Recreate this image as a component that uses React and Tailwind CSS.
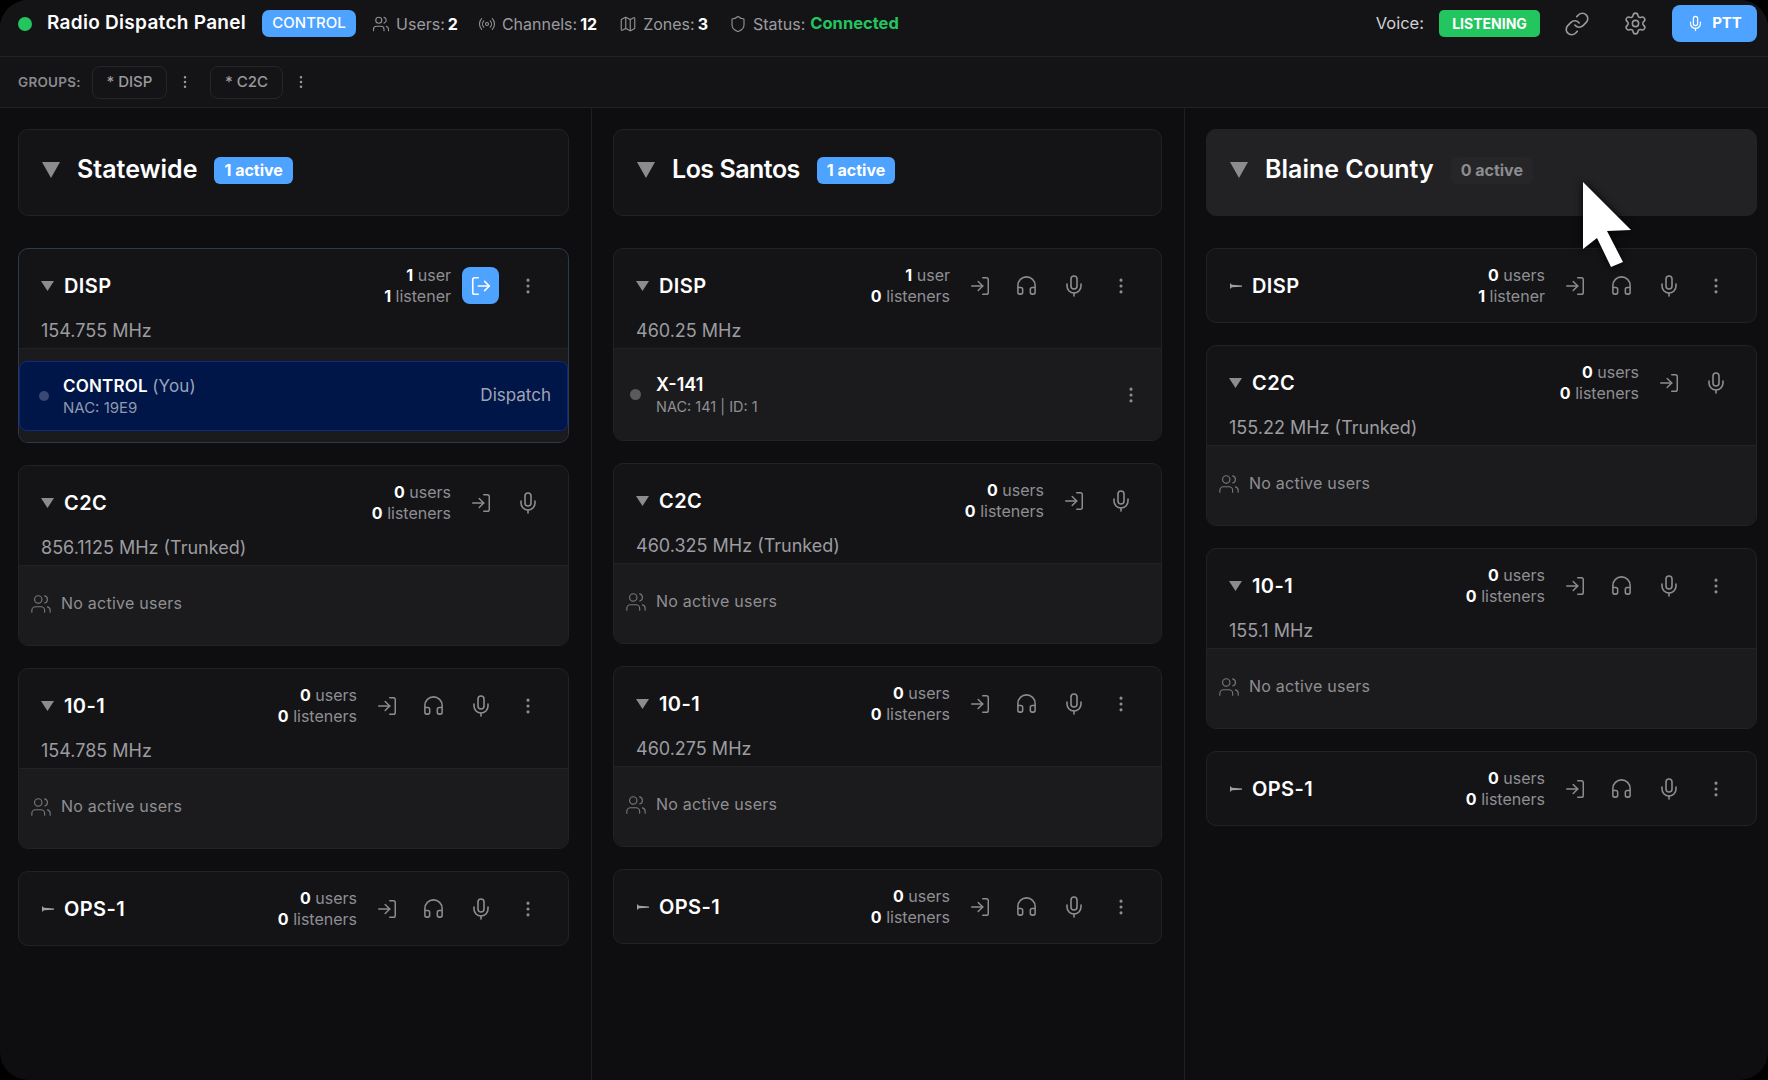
import { Users, Radio, Map, Shield, Link, Settings, Mic, LogIn, LogOut, Headphones, EllipsisVertical } from "lucide-react"

const zones = [
  {
    name: "Statewide",
    active: 1,
    columnClass: "w-[592px] shrink-0 pl-[18px] pr-[22px] border-r",
    channels: [
      { name: "DISP", users: 1, listeners: 1, freq: "154.755 MHz", joined: true, user: { name: "CONTROL", you: true, sub: "NAC: 19E9", role: "Dispatch" } },
      { name: "C2C", users: 0, listeners: 0, freq: "856.1125 MHz (Trunked)", trunked: true },
      { name: "10-1", users: 0, listeners: 0, freq: "154.785 MHz" },
      { name: "OPS-1", users: 0, listeners: 0, closed: true },
    ],
  },
  {
    name: "Los Santos",
    active: 1,
    titleClass: "tracking-[-0.02em]",
    columnClass: "w-[593px] shrink-0 pl-[21px] pr-[22px] border-r",
    channels: [
      { name: "DISP", users: 1, listeners: 0, freq: "460.25 MHz", user: { name: "X-141", sub: "NAC: 141 | ID: 1" } },
      { name: "C2C", users: 0, listeners: 0, freq: "460.325 MHz (Trunked)", trunked: true },
      { name: "10-1", users: 0, listeners: 0, freq: "460.275 MHz" },
      { name: "OPS-1", users: 0, listeners: 0, closed: true },
    ],
  },
  {
    name: "Blaine County",
    active: 0,
    hover: true,
    columnClass: "flex-1 pl-[21px] pr-[11px]",
    channels: [
      { name: "DISP", users: 0, listeners: 1, closed: true },
      { name: "C2C", users: 0, listeners: 0, freq: "155.22 MHz (Trunked)", trunked: true },
      { name: "10-1", users: 0, listeners: 0, freq: "155.1 MHz" },
      { name: "OPS-1", users: 0, listeners: 0, closed: true },
    ],
  },
]

function plural(count, word) {
  return count === 1 ? word : `${word}s`
}

function IconButton({ children }) {
  return <button className="flex h-[37px] w-[37px] items-center justify-center text-[#8d8d91]">{children}</button>
}

function HeadStat({ icon: Icon, label, value, className }) {
  return (
    <div className={`flex items-center ${className}`}>
      <Icon size={18} strokeWidth={1.5} className="mr-[6px] text-[#929296]" />
      <span className="text-[#9b9b9f]">{label}:</span>
      <span className="ml-[3px] font-bold text-white">{value}</span>
    </div>
  )
}

function ClosedCaret() {
  return (
    <svg width="13" height="10" viewBox="0 0 13 10" className="shrink-0 text-[#a0a0a0]">
      <polygon points="1,2 3,3.8 13,4.4 13,5.8 3,6.2 1,8" fill="currentColor" />
    </svg>
  )
}

function OpenCaret() {
  return (
    <svg width="13" height="10" viewBox="0 0 13 10" className="shrink-0 text-[#8c8c8c]">
      <polygon points="0,0 13,0 6.5,10" fill="currentColor" />
    </svg>
  )
}

function Channel({ channel }) {
  const { name, users, listeners, freq, closed, trunked, joined, user } = channel
  return (
    <div className={`overflow-hidden rounded-[10px] border bg-[#141417] ${joined ? "border-[#2b3a4e]" : "border-[#222225]"}`}>
      <div className={`pl-[22px] pr-[22px] ${closed ? "h-[73px]" : "h-[99px]"}`}>
        <div className="flex h-[73px] items-center">
          {closed ? <ClosedCaret /> : <OpenCaret />}
          <span className="ml-[10px] text-[20px] font-semibold tracking-[0.02em] text-white">{name}</span>
          <div className="ml-auto text-right text-[16px] leading-[21px] text-[#8f8f93]">
            <div><span className="font-bold text-white">{users}</span> {plural(users, "user")}</div>
            <div><span className="font-bold text-white">{listeners}</span> {plural(listeners, "listener")}</div>
          </div>
          <div className="ml-[11px] flex gap-[10px]">
            {joined ? (
              <button className="flex h-[37px] w-[37px] items-center justify-center rounded-[8px] bg-[#4da3ff] text-white">
                <LogOut size={22} strokeWidth={1.75} />
              </button>
            ) : (
              <IconButton><LogIn size={22} strokeWidth={1.6} /></IconButton>
            )}
            {!trunked && !joined && <IconButton><Headphones size={23} strokeWidth={1.6} /></IconButton>}
            {!joined && <IconButton><Mic size={24} strokeWidth={1.6} /></IconButton>}
            {!trunked && <IconButton><EllipsisVertical size={20} strokeWidth={1.75} /></IconButton>}
          </div>
        </div>
        {freq && <div className="-mt-[3px] text-[18px] leading-[24px] text-[#9c9ca0]">{freq}</div>}
      </div>
      {!closed && <ChannelBody user={user} />}
    </div>
  )
}

function ChannelBody({ user }) {
  if (user && user.you) {
    return (
      <div className="h-[94px] border-t border-[#222225] bg-[#1b1b1d] pt-[12px]">
        <div className="flex h-[70px] items-center rounded-[8px] border border-[#0c2a80] bg-[#001548] pl-[19px] pr-[16px]">
          <span className="h-[10px] w-[10px] rounded-full bg-[#3a4873]" />
          <div className="ml-[14px]">
            <div className="text-[17px] font-semibold leading-[24px] tracking-[0.01em] text-white">
              {user.name} <span className="font-normal text-[#9aa3b8]">(You)</span>
            </div>
            <div className="text-[15px] leading-[20px] text-[#9099ad]">{user.sub}</div>
          </div>
          <span className="ml-auto text-[17px] text-[#a0a5b4]">{user.role}</span>
        </div>
      </div>
    )
  }
  if (user) {
    return (
      <div className="flex h-[92px] items-center border-t border-[#222225] bg-[#1b1b1d] pl-[16px] pr-[20px]">
        <span className="h-[11px] w-[11px] rounded-full bg-[#5a5a5d]" />
        <div className="ml-[15px]">
          <div className="text-[18px] font-semibold leading-[24px] text-white">{user.name}</div>
          <div className="text-[14.5px] leading-[20px] text-[#8f8f93]">{user.sub}</div>
        </div>
        <EllipsisVertical size={20} strokeWidth={1.75} className="ml-auto text-[#8d8d91]" />
      </div>
    )
  }
  return (
    <div className="flex h-[80px] items-start border-t border-[#222225] bg-[#1b1b1d] pl-[11px] pt-[27px]">
      <Users size={22} strokeWidth={1.25} className="text-[#77777b]" />
      <span className="ml-[9px] text-[16px] leading-[20px] tracking-[0.015em] text-[#8f8f93]">No active users</span>
    </div>
  )
}

function ZoneColumn({ zone }) {
  return (
    <div className={`border-[#1f1f22] pt-[21px] ${zone.columnClass}`}>
      <div className={`flex h-[87px] items-center rounded-[10px] border pb-[5px] pl-[23px] ${zone.hover ? "border-[#222225] bg-[#222225]" : "border-[#222225] bg-[#141417]"}`}>
        <svg width="18" height="16" viewBox="0 0 18 16" className="shrink-0 text-[#8c8c8c]">
          <polygon points="0,0 18,0 9,16" fill="currentColor" />
        </svg>
        <span className={`ml-[17px] text-[25px] font-semibold text-white ${zone.titleClass || ""}`}>{zone.name}</span>
        <span className={`ml-[17px] flex h-[27px] items-center rounded-[6px] px-[10px] text-[16px] font-bold ${zone.active ? "bg-[#4da3ff] text-white" : "bg-[#262629] text-[#8c8c8f]"}`}>
          {zone.active} active
        </span>
      </div>
      <div className="mt-[32px] flex flex-col gap-[22px]">
        {zone.channels.map((channel) => (
          <Channel key={channel.name} channel={channel} />
        ))}
      </div>
    </div>
  )
}

export default function App() {
  return (
    <div className="h-[1080px] w-[1768px] overflow-hidden bg-black font-['Inter',sans-serif]">
      <div className="relative h-full w-full overflow-hidden rounded-[28px] bg-[#0e0e11]">
        <header className="flex h-[57px] items-center border-b border-[#222225] bg-[#141417] pb-[9px] pl-[18px] pr-[11px] text-[16px]">
          <span className="h-[14px] w-[14px] rounded-full bg-[#22c55e]" />
          <h1 className="ml-[15px] text-[19px] font-semibold tracking-[0.015em] text-white">Radio Dispatch Panel</h1>
          <span className="ml-[16px] flex h-[27px] w-[94px] items-center justify-center rounded-[7px] bg-[#4da3ff] text-[15px] font-medium text-white">CONTROL</span>
          <HeadStat icon={Users} label="Users" value="2" className="ml-[16px]" />
          <HeadStat icon={Radio} label="Channels" value="12" className="ml-[20px]" />
          <HeadStat icon={Map} label="Zones" value="3" className="ml-[22px]" />
          <div className="ml-[21px] flex items-center">
            <Shield size={18} strokeWidth={1.5} className="mr-[6px] text-[#929296]" />
            <span className="text-[#9b9b9f]">Status:</span>
            <span className="ml-[5px] text-[16.5px] font-bold text-[#22c55e]">Connected</span>
          </div>
          <span className="ml-auto text-[16.5px] text-[#d0d0d3]">Voice:</span>
          <span className="ml-[15px] flex h-[27px] w-[101px] items-center justify-center rounded-[5px] bg-[#22c55e] text-[14px] font-bold text-white">LISTENING</span>
          <Link size={26} strokeWidth={1.5} className="ml-[24px] text-[#9a9a9e]" />
          <Settings size={25} strokeWidth={1.5} className="ml-[33px] text-[#9a9a9e]" />
          <button className="ml-[24px] flex h-[37px] w-[85px] items-center justify-center gap-[8px] rounded-[8px] bg-[#4da3ff] text-[15px] font-bold text-white">
            <Mic size={17} strokeWidth={1.75} />
            PTT
          </button>
        </header>
        <div className="flex h-[51px] items-center border-b border-[#222225] bg-[#141417] pl-[18px] text-[#9a9a9e]">
          <span className="text-[13.5px] font-semibold tracking-[0.02em] text-[#8a8a8e]">GROUPS:</span>
          <button className="ml-[11px] flex h-[33px] w-[75px] items-center justify-center rounded-[8px] border border-[#26262a] text-[15px] font-medium">* DISP</button>
          <EllipsisVertical size={16} strokeWidth={1.75} className="ml-[10px]" />
          <button className="ml-[17px] flex h-[33px] w-[73px] items-center justify-center rounded-[8px] border border-[#26262a] text-[15px] font-medium">* C2C</button>
          <EllipsisVertical size={16} strokeWidth={1.75} className="ml-[10px]" />
        </div>
        <main className="flex h-[972px]">
          {zones.map((zone) => (
            <ZoneColumn key={zone.name} zone={zone} />
          ))}
        </main>
        <svg width="70" height="100" viewBox="0 0 70 100" className="absolute left-[1570px] top-[172px] drop-shadow-[0_0_4px_rgba(0,0,0,0.9)]">
          <polygon points="13,10 61,58 37,59 53,90 41,95 27,66 13,77" fill="#ffffff" />
        </svg>
      </div>
    </div>
  )
}
